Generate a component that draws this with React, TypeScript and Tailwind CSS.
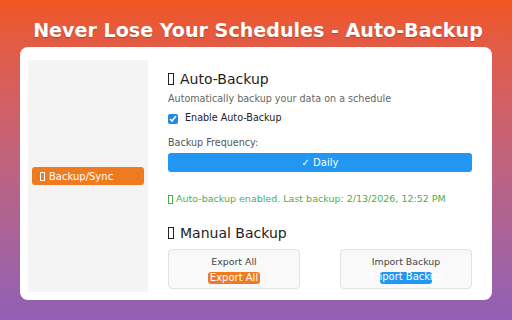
import React from "react";

function Tofu({ className = "" }: { className?: string }) {
  return (
    <span
      className={`inline-block border border-current align-[-1px] ${className}`}
    />
  );
}

export default function App() {
  return (
    <div
      className="w-[512px] h-[320px] flex flex-col bg-gradient-to-b from-[#f0561f] to-[#915fb6] overflow-hidden"
      style={{ fontFamily: '"DejaVu Sans", sans-serif' }}
    >
      <h1 className="text-center text-white font-bold text-[19.1px] leading-none pt-[21px] pb-[7px] pl-[4px] [text-shadow:0_1px_1px_rgba(170,40,0,0.6)]">
        Never Lose Your Schedules - Auto-Backup
      </h1>

      <div className="mx-5 flex-1 mb-[20px] bg-white rounded-lg flex pt-[13px] pb-2 px-2 gap-5">
        {/* Sidebar */}
        <aside className="w-[120px] bg-[#f4f4f4] flex items-center px-1">
          <button className="w-full h-[18px] rounded-[3px] bg-[#f07a20] text-white text-[10px] text-left pl-[8px] flex items-center gap-[4px]">
            <Tofu className="w-[5px] h-[9px]" />
            Backup/Sync
          </button>
        </aside>

        {/* Content */}
        <main className="flex-1 pr-3 pt-[12px]">
          <h2 className="text-[14px] leading-none text-[#222] flex items-center gap-[6px]">
            <Tofu className="w-[6px] h-[12px]" />
            Auto-Backup
          </h2>
          <p className="text-[9.6px] text-[#666] mt-[6px]">
            Automatically backup your data on a schedule
          </p>
          <label className="flex items-center gap-[7px] mt-[5px] text-[9.6px] text-[#222]">
            <input
              type="checkbox"
              defaultChecked
              className="w-[10px] h-[10px] m-0 accent-[#1e88e5]"
            />
            Enable Auto-Backup
          </label>
          <p className="text-[9.6px] text-[#555] mt-[10px]">Backup Frequency:</p>
          <div className="mt-[3px] h-[19px] rounded-[3px] bg-[#2196f3] text-white text-[10px] flex items-center justify-center">
            ✓ Daily
          </div>
          <p className="mt-[20px] text-[9.5px] text-[#4caf50] flex items-center gap-[3px]">
            <Tofu className="w-[5px] h-[9px]" />
            Auto-backup enabled. Last backup: 2/13/2026, 12:52 PM
          </p>

          <h2 className="mt-[19px] text-[14px] leading-none text-[#222] flex items-center gap-[6px]">
            <Tofu className="w-[6px] h-[12px]" />
            Manual Backup
          </h2>
          <div className="mt-[9px] grid grid-cols-2 gap-10">
            <div className="h-[40px] border border-[#e2e2e2] bg-[#f9f9f9] rounded-[4px] flex flex-col items-center pt-[5px]">
              <span className="text-[9.4px] text-[#444]">Export All</span>
              <button className="mt-[3px] h-[12px] px-[2px] rounded-[3px] bg-[#f07a20] text-white text-[10px] leading-none">
                Export All
              </button>
            </div>
            <div className="h-[40px] border border-[#e2e2e2] bg-[#f9f9f9] rounded-[4px] flex flex-col items-center pt-[5px]">
              <span className="text-[9.4px] text-[#444]">Import Backup</span>
              <button className="mt-[3px] w-[52px] h-[12px] rounded-[3px] bg-[#2196f3] text-white text-[10px] leading-none flex justify-center whitespace-nowrap">
                Import Backup
              </button>
            </div>
          </div>
        </main>
      </div>
    </div>
  );
}
